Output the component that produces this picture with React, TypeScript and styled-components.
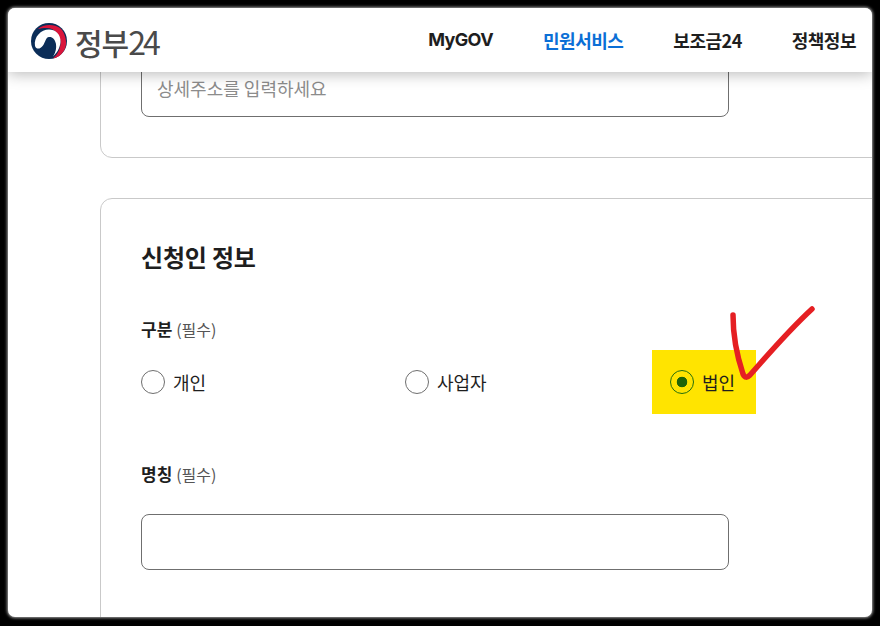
import React, { FC } from 'react';
import styled, { createGlobalStyle } from 'styled-components';

const FONT = '"Noto Sans CJK KR", "Noto Sans", "Liberation Sans", sans-serif';

const GlobalStyle = createGlobalStyle`
	html, body {
		margin: 0;
		padding: 0;
		background: #000;
		font-family: ${FONT};
	}
`;

const navItems = ['MyGOV', '민원서비스', '보조금24', '정책정보'];
const kinds = ['개인', '사업자', '법인'];

const Logo: FC = () => (
	<LogoWrap>
		<svg width="38" height="38" viewBox="0 0 38 38">
			<circle cx="19" cy="19" r="18" fill="#0b2d58" />
			<path
				d="M8 7C13 2 24 1.500 30 6 36 11 38.500 24 33 30 30 34 27 36 23 36.500 28 32 31 26 30.500 19 29 11 24 6.500 17 6 13 6 10 6.500 8 7Z"
				fill="#d9153b"
			/>
			<path
				d="M5 24C3.500 15 11 7.500 19 7.500 25 7.500 31 12 30.500 20 30 26 27 31 23 34.500 26 30 26.500 26 26 22 25 17 22 14.500 19 15 15.500 15.500 15.500 20 13 23.500 10.500 27 6.500 28 5 24Z"
				fill="#fff"
			/>
		</svg>
		<LogoText>
			정부<LogoNumber>24</LogoNumber>
		</LogoText>
	</LogoWrap>
);

export default function App() {
	return (
		<>
			<GlobalStyle />
			<Frame>
				<Screen>
					<Header>
						<Logo />
						<Nav>
							{navItems.map((el) => (
								<NavItem key={el} $active={el === '민원서비스'} $latin={el === 'MyGOV'}>
									{el}
								</NavItem>
							))}
						</Nav>
					</Header>
					<Content>
						<AddressCard>
							<TextInput placeholder="상세주소를 입력하세요" readOnly />
						</AddressCard>
						<ApplicantCard>
							<CardTitle>신청인 정보</CardTitle>
							<FieldLabel>
								구분 <Required>(필수)</Required>
							</FieldLabel>
							<RadioRow>
								{kinds.map((el) => (
									<RadioItem key={el} $marked={el === '법인'}>
										<RadioCircle $checked={el === '법인'} />
										{el}
									</RadioItem>
								))}
								<CheckMark viewBox="0 0 90 76" width="90" height="76">
									<path
										d="M6 9C6 30 10 50 16 68 18 72 20 72 23 69 40 50 60 26 85 3"
										fill="none"
										stroke="#e51f23"
										strokeWidth="5.500"
										strokeLinecap="round"
										strokeLinejoin="round"
									/>
								</CheckMark>
							</RadioRow>
							<NameLabel>
								명칭 <Required>(필수)</Required>
							</NameLabel>
							<TextInput readOnly />
						</ApplicantCard>
					</Content>
				</Screen>
			</Frame>
		</>
	);
}

const Frame = styled.div`
	box-sizing: border-box;
	width: 880px;
	height: 626px;
	padding: 8px 8px 9px 8px;
	background: #000;
`;

const Screen = styled.div`
	display: flex;
	flex-direction: column;
	height: 100%;
	overflow: hidden;
	border-radius: 7px;
	background: #fff;
	box-shadow: 0 0 3px 1px #a0a0a0;
`;

const Header = styled.header`
	position: relative;
	z-index: 2;
	flex: none;
	display: flex;
	align-items: center;
	justify-content: space-between;
	height: 64px;
	padding: 0 16px 0 22px;
	background: #fff;
	box-shadow: 0 2px 14px rgba(0, 0, 0, 0.28);
`;

const LogoWrap = styled.div`
	display: flex;
	align-items: center;
	gap: 7px;
	margin-top: 2px;
`;

const LogoText = styled.span`
	font-size: 30px;
	font-weight: 500;
	line-height: 1;
	letter-spacing: -1px;
	color: #4a4a4a;
`;

const LogoNumber = styled.span`
	font-size: 32px;
	font-weight: 400;
	letter-spacing: -3px;
`;

const Nav = styled.nav`
	display: flex;
	align-items: center;
	gap: 50px;
`;

const NavItem = styled.span<{ $active?: boolean; $latin?: boolean }>`
	font-family: ${(p) => (p.$latin ? 'Inter, sans-serif' : FONT)};
	font-size: 18px;
	font-weight: 700;
	line-height: 26px;
	letter-spacing: ${(p) => (p.$latin ? '-0.6px' : '-0.5px')};
	color: ${(p) => (p.$active ? '#0b6fd6' : '#1e1e1e')};
`;

const Content = styled.main`
	flex: 1;
	min-height: 0;
	padding-left: 92px;
`;

const AddressCard = styled.section`
	box-sizing: border-box;
	margin-top: -31px;
	margin-right: -20px;
	padding: 19px 40px 40px;
	border: 1px solid #c9c9c9;
	border-radius: 12px;
`;

const ApplicantCard = styled.section`
	box-sizing: border-box;
	margin-top: 40px;
	margin-right: -20px;
	height: 480px;
	padding: 40px 40px 0;
	border: 1px solid #c9c9c9;
	border-radius: 12px;
`;

const TextInput = styled.input`
	display: block;
	box-sizing: border-box;
	width: 588px;
	height: 56px;
	padding: 0 15px 3px;
	border: 1px solid #6f6f6f;
	border-radius: 8px;
	outline: none;
	background: #fff;
	font-family: ${FONT};
	font-size: 18px;

	&::placeholder {
		color: #8c8c8c;
		opacity: 1;
	}
`;

const CardTitle = styled.h2`
	margin: 0;
	font-size: 24px;
	font-weight: 700;
	line-height: 36px;
	letter-spacing: -0.2px;
	color: #1e1e1e;
`;

const FieldLabel = styled.div`
	margin-top: 41px;
	font-size: 17px;
	font-weight: 700;
	line-height: 26px;
	color: #1e1e1e;
`;

const NameLabel = styled(FieldLabel)`
	margin-top: 47px;
	margin-bottom: 27px;
`;

const Required = styled.span`
	font-size: 16px;
	font-weight: 400;
	color: #555;
`;

const RadioRow = styled.div`
	position: relative;
	display: grid;
	grid-template-columns: 264px 247px auto;
	align-items: center;
	width: 615px;
	margin-top: 8px;
	height: 64px;
`;

const RadioItem = styled.label<{ $marked?: boolean }>`
	display: flex;
	align-items: center;
	gap: 8px;
	height: 64px;
	width: ${(p) => (p.$marked ? '104px' : 'auto')};
	padding-left: ${(p) => (p.$marked ? '18px' : '0')};
	padding-bottom: 1px;
	box-sizing: border-box;
	background: ${(p) => (p.$marked ? '#ffe400' : 'transparent')};
	font-size: 18px;
	color: #1e1e1e;
`;

const RadioCircle = styled.span<{ $checked?: boolean }>`
	flex: none;
	box-sizing: border-box;
	width: 24px;
	height: 24px;
	border-radius: 50%;
	border: 1px solid ${(p) => (p.$checked ? '#256f0c' : '#6f6f6f')};
	background: ${(p) =>
		p.$checked ? 'radial-gradient(circle, #1f6408 0 5px, transparent 5.6px)' : '#fff'};
`;

const CheckMark = styled.svg`
	position: absolute;
	left: 586px;
	top: -44px;
`;
